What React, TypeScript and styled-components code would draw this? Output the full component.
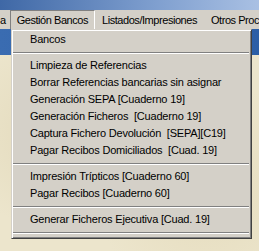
import React from "react";
import styled, { createGlobalStyle } from "styled-components";

const GlobalStyle = createGlobalStyle`
  html, body {
    margin: 0;
    padding: 0;
    overflow: hidden;
  }
  body {
    font-family: "Liberation Sans", Arial, sans-serif;
  }
`;

type Entry = { kind: "item"; label: string } | { kind: "sep" };

const entries: Entry[] = [
  { kind: "item", label: "Bancos" },
  { kind: "sep" },
  { kind: "item", label: "Limpieza de Referencias" },
  { kind: "item", label: "Borrar Referencias bancarias sin asignar" },
  { kind: "item", label: "Generación SEPA [Cuaderno 19]" },
  { kind: "item", label: "Generación Ficheros  [Cuaderno 19]" },
  { kind: "item", label: "Captura Fichero Devolución  [SEPA][C19]" },
  { kind: "item", label: "Pagar Recibos Domiciliados  [Cuad. 19]" },
  { kind: "sep" },
  { kind: "item", label: "Impresión Trípticos [Cuaderno 60]" },
  { kind: "item", label: "Pagar Recibos [Cuaderno 60]" },
  { kind: "sep" },
  { kind: "item", label: "Generar Ficheros Ejecutiva [Cuad. 19]" },
  { kind: "sep" },
];

const App: React.FC = () => {
  return (
    <Screen>
      <GlobalStyle />
      <TitleBar />
      <MenuBar>
        <TopItem>a</TopItem>
        <TopItem $open>Gestión Bancos</TopItem>
        <TopItem>Listados/Impresiones</TopItem>
        <TopItem>Otros Procesos</TopItem>
      </MenuBar>
      <Workspace>
        <ChildTitle />
        <Parchment />
        <Dropdown>
          {entries.map((e, i) =>
            e.kind === "sep" ? (
              <Separator key={i} />
            ) : (
              <MenuItem key={i}>{e.label}</MenuItem>
            )
          )}
        </Dropdown>
      </Workspace>
    </Screen>
  );
};

const Screen = styled.div`
  width: 259px;
  height: 251px;
  overflow: hidden;
  display: flex;
  flex-direction: column;
  background: #ebe3ca;
`;

const TitleBar = styled.div`
  height: 10px;
  flex: none;
  background: linear-gradient(to right, #3f68a6, #7f9fcf 60%, #a9c0e3);
`;

const MenuBar = styled.div`
  height: 19px;
  flex: none;
  display: flex;
  align-items: stretch;
  background: #d4d0c8;
  white-space: nowrap;
  font-size: 11px;
  letter-spacing: -0.45px;
  color: #000;
`;

const TopItem = styled.div<{ $open?: boolean }>`
  display: flex;
  align-items: center;
  flex: none;
  padding: 0 6px;
  box-sizing: border-box;
  border: 1px solid transparent;
  border-bottom: none;
  &:first-child {
    padding: 0 4px 0 0;
    margin-left: 0;
    border: none;
  }
  ${(p) =>
    p.$open &&
    `
    border-color: #808080 #ffffff transparent #808080;
  `}
`;

const Workspace = styled.div`
  position: relative;
  flex: 1;
  display: flex;
  flex-direction: column;
`;

const ChildTitle = styled.div`
  height: 26px;
  flex: none;
  background: linear-gradient(to right, #3a6cb1, #2b5ea6);
`;

const Parchment = styled.div`
  flex: 1;
  background:
    radial-gradient(circle at 20% 40%, rgba(200, 185, 140, 0.25), transparent 40%),
    radial-gradient(circle at 80% 70%, rgba(210, 195, 150, 0.25), transparent 45%),
    #ece5cc;
`;

const Dropdown = styled.div`
  position: absolute;
  left: 11px;
  top: 0;
  width: 241px;
  box-sizing: border-box;
  background: #d4d0c8;
  border-top: 1px solid #d4d0c8;
  border-left: 1px solid #d4d0c8;
  border-right: 1px solid #404040;
  border-bottom: 1px solid #404040;
  box-shadow: inset 1px 1px 0 #ffffff, inset -1px -1px 0 #808080;
  padding: 1px;
  display: flex;
  flex-direction: column;
  font-size: 11px;
  letter-spacing: -0.2px;
  color: #000;
`;

const MenuItem = styled.div`
  height: 17px;
  line-height: 16px;
  padding-left: 17px;
  white-space: pre;
`;

const Separator = styled.div`
  height: 9px;
  position: relative;
  &::after {
    content: "";
    position: absolute;
    left: 0;
    right: 1px;
    top: 4px;
    height: 1px;
    background: #808080;
    border-bottom: 1px solid #ffffff;
  }
`;

export default App;
